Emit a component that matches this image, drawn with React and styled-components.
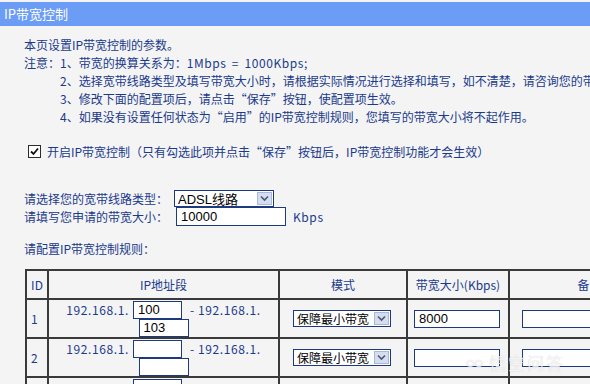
import styled, { createGlobalStyle } from "styled-components";

const GlobalStyle = createGlobalStyle`
  html, body {
    margin: 0;
    padding: 0;
    background: #f4f4f4;
  }
  body {
    font-family: "Noto Sans CJK SC", sans-serif;
    font-size: 12px;
    color: #1a3a8c;
    overflow: hidden;
  }
`;

const Page = styled.div`
  position: relative;
  width: 590px;
  height: 384px;
  overflow: hidden;
  box-sizing: border-box;
  padding-top: 2px;
  background: #f4f4f4;
`;

const TitleBar = styled.div`
  height: 24px;
  line-height: 24px;
  padding-left: 4px;
  background: #6b9cf6;
  color: #ffffff;
  font-size: 13px;
  white-space: nowrap;
`;

const Content = styled.div`
  padding: 10px 0 0 24px;
  white-space: nowrap;
`;

const Notes = styled.div`
  line-height: 18px;
`;

const NoteRow = styled.div`
  padding-left: ${({ indent }) => (indent ? "36px" : "0")};
`;

const Ascii = styled.span`
  letter-spacing: 0.6px;
  word-spacing: 2px;
`;

const CheckRow = styled.label`
  display: flex;
  align-items: center;
  gap: 6px;
  height: 18px;
  margin-top: 16px;
  padding-left: 4px;
`;

const CheckBox = styled.span`
  display: flex;
  align-items: center;
  justify-content: center;
  width: 11px;
  height: 11px;
  border: 1px solid #2b2b2b;
  background: #fff;
`;

const Form = styled.div`
  display: grid;
  grid-template-columns: 150px auto 1fr;
  grid-template-rows: 17px 19px;
  align-items: center;
  margin-top: 30px;
`;

const SelectBox = styled.div`
  display: flex;
  align-items: center;
  justify-content: space-between;
  box-sizing: border-box;
  width: ${({ w }) => w}px;
  height: 17px;
  border: 1px solid #1e3a7e;
  background: #fff;
  color: #000;
  font-family: "Liberation Sans", "Noto Sans CJK SC", sans-serif;
  font-size: ${({ fs }) => fs || 13}px;
  padding-left: 3px;
`;

const Arrow = styled.span`
  display: flex;
  align-items: center;
  justify-content: center;
  box-sizing: border-box;
  width: 15px;
  height: 13px;
  margin-right: 1px;
  background: #d5ddee;
  border: 1px solid #a8b8d8;
`;

const TextInput = styled.div`
  box-sizing: border-box;
  width: ${({ w }) => w}px;
  height: ${({ h }) => h || 18}px;
  line-height: ${({ h }) => (h || 18) - 2}px;
  margin-left: ${({ ml }) => ml || 0}px;
  padding-left: 4px;
  border: 1px solid #1e3a7e;
  background: #fff;
  color: #000;
  font-family: "Liberation Sans", sans-serif;
  font-size: 13px;
  text-align: left;
`;

const Unit = styled.span`
  padding-left: 7px;
  letter-spacing: 0.6px;
`;

const RulesTitle = styled.div`
  line-height: 18px;
  margin-top: 14px;
`;

const Table = styled.table`
  table-layout: fixed;
  border-collapse: collapse;
  width: 644px;
  margin: 11px 0 0 1px;
  & td,
  & th {
    border: 2px solid #3a3a3a;
    padding: 0;
    font-weight: normal;
    color: #1a3a8c;
  }
`;

const HeadRow = styled.tr`
  height: 29px;
  & th {
    text-align: center;
  }
`;

const BodyRow = styled.tr`
  height: 38px;
`;

const IdCell = styled.td`
  text-align: left;
  padding-left: 4px !important;
`;

const IpCell = styled.td`
  text-align: center;
  vertical-align: top;
  padding-top: 1px !important;
`;

const IpWrap = styled.div`
  display: flex;
  flex-wrap: wrap;
  justify-content: center;
  align-items: center;
  line-height: 18px;
`;

const IpText = styled.span`
  margin: ${({ m }) => m};
  letter-spacing: 0.6px;
`;

const CenterCell = styled.td`
  vertical-align: middle;
  padding-left: ${({ pl }) => pl}px !important;
`;

const Watermark = styled.div`
  position: absolute;
  left: 466px;
  top: 350px;
  display: flex;
  align-items: center;
  gap: 4px;
  color: rgba(255, 255, 255, 0.75);
  font-size: 17px;
  letter-spacing: 2px;
  text-shadow: 0 0 1px rgba(120, 120, 120, 0.35);
`;

function Chevron() {
  return (
    <svg width="9" height="7" viewBox="0 0 9 7">
      <path d="M1 1.5 L4.5 5 L8 1.5" fill="none" stroke="#4a5a7a" strokeWidth="1.6" />
    </svg>
  );
}

function Select({ w, fs, children }) {
  return (
    <SelectBox w={w} fs={fs}>
      <span>{children}</span>
      <Arrow>
        <Chevron />
      </Arrow>
    </SelectBox>
  );
}

const rows = [
  { id: 1, from: "100", to: "103", bw: "8000" },
  { id: 2, from: "", to: "", bw: "" },
  { id: 3, from: "", to: "", bw: "" },
];

export default function App() {
  return (
    <Page>
      <GlobalStyle />
      <TitleBar>IP带宽控制</TitleBar>
      <Content>
        <Notes>
          <NoteRow>本页设置IP带宽控制的参数。</NoteRow>
          <NoteRow>
            注意：1、带宽的换算关系为：<Ascii>1Mbps = 1000Kbps;</Ascii>
          </NoteRow>
          <NoteRow indent>
            2、选择宽带线路类型及填写带宽大小时，请根据实际情况进行选择和填写，如不清楚，请咨询您的带宽提供商（如电信、网通等）。
          </NoteRow>
          <NoteRow indent>3、修改下面的配置项后，请点击“保存”按钮，使配置项生效。</NoteRow>
          <NoteRow indent>
            4、如果没有设置任何状态为“启用”的IP带宽控制规则，您填写的带宽大小将不起作用。
          </NoteRow>
        </Notes>

        <CheckRow>
          <CheckBox>
            <svg width="9" height="9" viewBox="0 0 9 9">
              <path d="M1 4.5 L3.5 7 L8 1.5" fill="none" stroke="#111" strokeWidth="1.8" />
            </svg>
          </CheckBox>
          开启IP带宽控制（只有勾选此项并点击“保存”按钮后，IP带宽控制功能才会生效）
        </CheckRow>

        <Form>
          <span>请选择您的宽带线路类型：</span>
          <Select w={100}>ADSL线路</Select>
          <span />
          <span>请填写您申请的带宽大小：</span>
          <TextInput w={110} h={19} ml={2}>10000</TextInput>
          <Unit>Kbps</Unit>
        </Form>

        <RulesTitle>请配置IP带宽控制规则：</RulesTitle>

        <Table>
          <colgroup>
            <col style={{ width: 22 }} />
            <col style={{ width: 231 }} />
            <col style={{ width: 128 }} />
            <col style={{ width: 102 }} />
            <col style={{ width: 161 }} />
          </colgroup>
          <thead>
            <HeadRow>
              <th>ID</th>
              <th>IP地址段</th>
              <th>模式</th>
              <th>带宽大小(Kbps)</th>
              <th>备注</th>
            </HeadRow>
          </thead>
          <tbody>
            {rows.map((r) => (
              <BodyRow key={r.id}>
                <IdCell>{r.id}</IdCell>
                <IpCell>
                  <IpWrap>
                    <IpText m="0 4px 0 0">192.168.1.</IpText>
                    <TextInput w={49} h={18}>{r.from}</TextInput>
                    <IpText m="0 0 0 8px">- 192.168.1.</IpText>
                    <TextInput w={50} h={18}>{r.to}</TextInput>
                  </IpWrap>
                </IpCell>
                <CenterCell pl={13}>
                  <Select w={98} fs={12}>保障最小带宽</Select>
                </CenterCell>
                <CenterCell pl={6}>
                  <TextInput w={86} h={18}>{r.bw}</TextInput>
                </CenterCell>
                <CenterCell pl={12}>
                  <TextInput w={150} h={18} />
                </CenterCell>
              </BodyRow>
            ))}
          </tbody>
        </Table>
      </Content>
      <Watermark>
        <span>∞</span>
        <span>悟空问答</span>
      </Watermark>
    </Page>
  );
}
